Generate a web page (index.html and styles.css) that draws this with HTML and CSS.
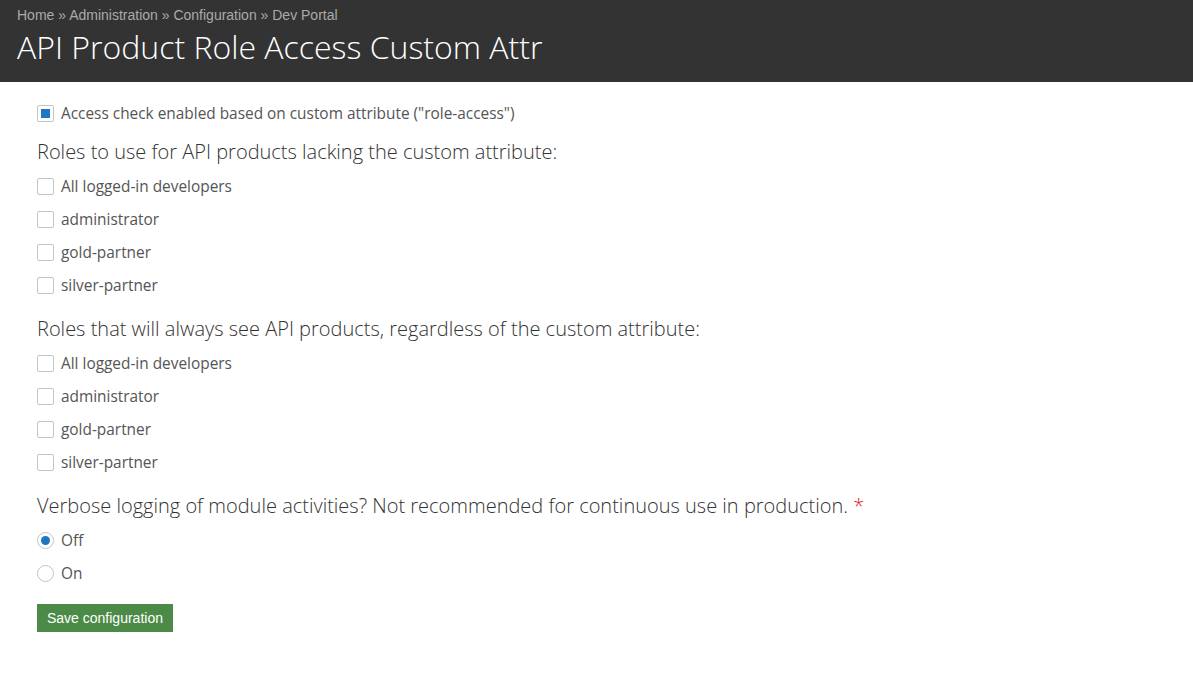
FILE: index.html
```html
<!DOCTYPE html>
<html>
<head>
<meta charset="utf-8">
<link rel="stylesheet" href="styles.css">
</head>
<body>
<header class="page-header">
  <nav class="breadcrumb">Home » Administration » Configuration » Dev Portal</nav>
  <h1 class="title">API Product Role Access Custom Attr</h1>
</header>
<main class="content">
  <div class="item"><span class="box checked"></span><span class="label">Access check enabled based on custom attribute ("role-access")</span></div>
  <h2 class="legend">Roles to use for API products lacking the custom attribute:</h2>
  <div class="group">
    <div class="item"><span class="box"></span><span class="label">All logged-in developers</span></div>
    <div class="item"><span class="box"></span><span class="label">administrator</span></div>
    <div class="item"><span class="box"></span><span class="label">gold-partner</span></div>
    <div class="item"><span class="box"></span><span class="label">silver-partner</span></div>
  </div>
  <h2 class="legend">Roles that will always see API products, regardless of the custom attribute:</h2>
  <div class="group">
    <div class="item"><span class="box"></span><span class="label">All logged-in developers</span></div>
    <div class="item"><span class="box"></span><span class="label">administrator</span></div>
    <div class="item"><span class="box"></span><span class="label">gold-partner</span></div>
    <div class="item"><span class="box"></span><span class="label">silver-partner</span></div>
  </div>
  <h2 class="legend">Verbose logging of module activities? Not recommended for continuous use in production. <span class="req">*</span></h2>
  <div class="group">
    <div class="item"><span class="radio checked"></span><span class="label">Off</span></div>
    <div class="item"><span class="radio"></span><span class="label">On</span></div>
  </div>
  <button class="save">Save configuration</button>
</main>
</body>
</html>
```
FILE: styles.css
```css
html, body { margin: 0; padding: 0; background: #fff; }
body { font-family: "Open Sans", sans-serif; color: #333; }
.page-header {
  background: #333;
  height: 82px;
  padding: 7px 17px 0;
  box-sizing: border-box;
}
.breadcrumb {
  font-family: "Liberation Sans", Arial, sans-serif;
  font-size: 14px;
  color: #aaa;
  line-height: 17px;
}
.title {
  margin: 3px 0 0;
  font-weight: 300;
  font-size: 32px;
  line-height: 40px;
  color: #fff;
}
.content {
  padding: 15px 37px;
  display: flex;
  flex-direction: column;
  align-items: flex-start;
}
.group {
  display: flex;
  flex-direction: column;
  margin-bottom: 5px;
}
.item {
  display: flex;
  align-items: center;
  height: 33px;
}
.label {
  font-size: 15.4px;
  color: #555;
  margin-left: 7px;
}
.box {
  width: 17px; height: 17px;
  box-sizing: border-box;
  border: 1px solid #c4c4c4;
  border-radius: 2px;
  display: flex; align-items: center; justify-content: center;
}
.box.checked::after {
  content: ""; width: 9px; height: 9px; background: #1f77c4;
}
.radio {
  width: 17px; height: 17px;
  box-sizing: border-box;
  border: 1px solid #c4c4c4;
  border-radius: 50%;
  display: flex; align-items: center; justify-content: center;
}
.radio.checked::after {
  content: ""; width: 9px; height: 9px; background: #1f77c4; border-radius: 50%;
}
.legend {
  font-weight: 300;
  font-size: 20px;
  color: #333;
  margin: 9px 0 5px;
  line-height: 26px;
}
.req { color: #e02020; }
.save {
  margin-top: 9px;
  background: #4b8b47;
  color: #fff;
  border: none;
  font-family: "Liberation Sans", Arial, sans-serif;
  font-size: 14px;
  height: 28px;
  padding: 0 10px;
}
```
